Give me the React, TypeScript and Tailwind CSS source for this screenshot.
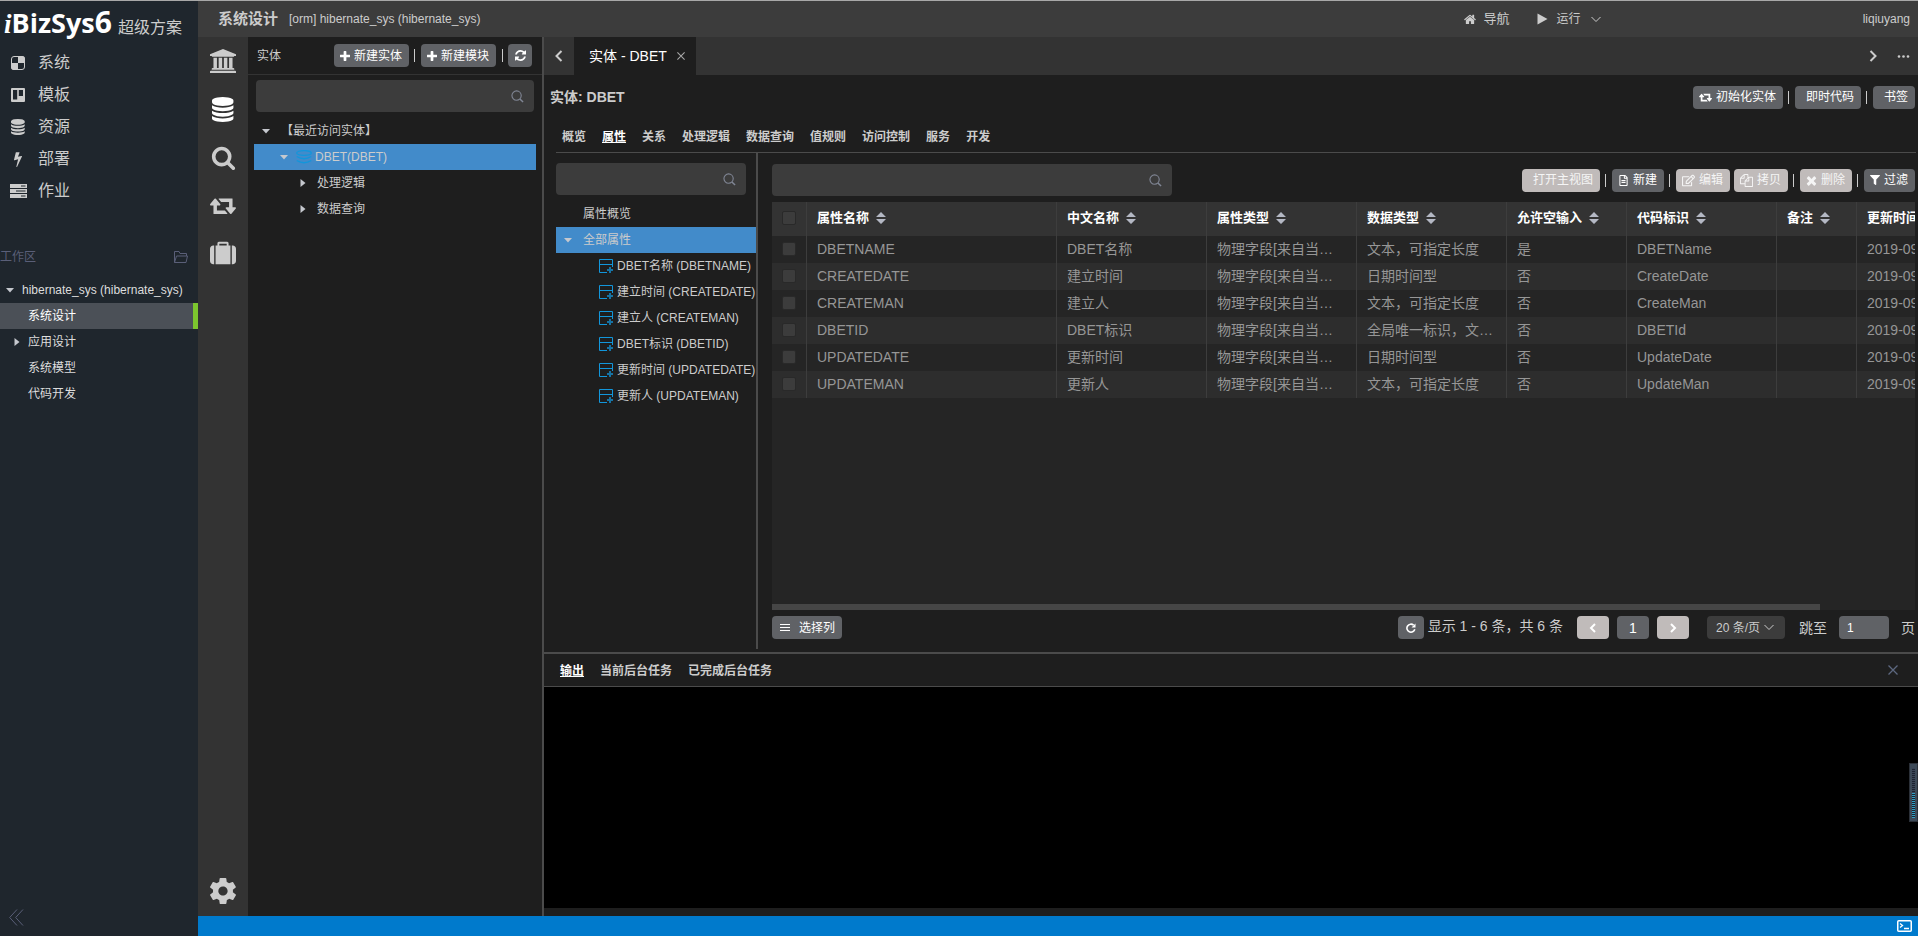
import { useState } from "react";
import type { ReactNode } from "react";
import { FaFilter, FaRegEdit, FaRegFileAlt } from "react-icons/fa";
import { IoMdSettings } from "react-icons/io";

const paths = {
  database:
    "M768 768q237 0 443-43t325-127v170q0 69-103 128t-280 93.5-385 34.5-385-34.5-280-93.5-103-128v-170q119 84 325 127t443 43zm0 768q237 0 443-43t325-127v170q0 69-103 128t-280 93.5-385 34.5-385-34.5-280-93.5-103-128v-170q119 84 325 127t443 43zm0-384q237 0 443-43t325-127v170q0 69-103 128t-280 93.5-385 34.5-385-34.5-280-93.5-103-128v-170q119 84 325 127t443 43zm0-1152q208 0 385 34.5t280 93.5 103 128v128q0 69-103 128t-280 93.5-385 34.5-385-34.5-280-93.5-103-128v-128q0-69 103-128t280-93.5 385-34.5z",
  retweet:
    "M1280 1632q0 13-9.5 22.5t-22.5 9.5h-960q-8 0-13.5-2t-9-7-5.5-8-3-11.5-1-11.5v-600h-192q-26 0-45-19t-19-45q0-24 15-41l320-384q19-22 49-22t49 22l320 384q15 17 15 41 0 26-19 45t-45 19h-192v384h576q16 0 25 11l160 192q7 10 7 21zm640-416q0 24-15 41l-320 384q-20 23-49 23t-49-23l-320-384q-15-17-15-41 0-26 19-45t45-19h192v-384h-576q-16 0-25-12l-160-192q-7-9-7-20 0-13 9.5-22.5t22.5-9.5h960q8 0 13.5 2t9 7 5.5 8 3 11.5 1 11.5v600h192q26 0 45 19t19 45z",
  search:
    "M1216 832q0-185-131.5-316.5t-316.5-131.5-316.5 131.5-131.5 316.5 131.5 316.5 316.5 131.5 316.5-131.5 131.5-316.5zm512 832q0 52-38 90t-90 38q-54 0-90-38l-343-342q-179 124-399 124-143 0-273.5-55.5t-225-150-150-225-55.5-273.5 55.5-273.5 150-225 225-150 273.5-55.5 273.5 55.5 225 150 150 225 55.5 273.5q0 220-124 399l343 343q37 37 37 90z",
  suitcase:
    "M640 384h512v-128h-512v128zm-352 0v1280h-64q-92 0-158-66t-66-158v-832q0-92 66-158t158-66h64zm1120 0v1280h-1024v-1280h128v-160q0-40 28-68t68-28h576q40 0 68 28t28 68v160h128zm384 224v832q0 92-66 158t-158 66h-64v-1280h64q92 0 158 66t66 158z",
  bank: "M960 0l960 384v128h-128q0 26-20.5 45t-48.5 19h-1526q-28 0-48.5-19t-20.5-45h-128v-128zm-704 640h256v768h128v-768h256v768h128v-768h256v768h128v-768h256v768h59q28 0 48.5 19t20.5 45v64h-1664v-64q0-26 20.5-45t48.5-19h59v-768zm1595 960q28 0 48.5 19t20.5 45v128h-1920v-128q0-26 20.5-45t48.5-19h1782z",
  home: "M1408 992v480q0 26-19 45t-45 19h-384v-384h-256v384h-384q-26 0-45-19t-19-45v-480q0-1 .5-3t.5-3l575-474 575 474q1 2 1 6zm223-69l-62 74q-8 9-21 11h-3q-13 0-21-7l-692-577-692 577q-12 8-24 7-13-2-21-11l-62-74q-8-10-7-23.5t11-21.5l719-599q32-26 76-26t76 26l244 204v-195q0-14 9-23t23-9h192q14 0 23 9t9 23v408l219 182q10 8 11 21.5t-7 23.5z",
  refresh:
    "M1511 928q0 5-1 7-64 268-268 434.5t-478 166.5q-146 0-282.5-55t-243.5-157l-129 129q-19 19-45 19t-45-19-19-45v-448q0-26 19-45t45-19h448q26 0 45 19t19 45-19 45l-137 137q71 66 161 102t187 36q134 0 250-65t186-179q11-17 53-117 8-23 30-23h192q13 0 22.5 9.5t9.5 22.5zm25-800v448q0 26-19 45t-45 19h-448q-26 0-45-19t-19-45 19-45l138-138q-148-137-349-137-134 0-250 65t-186 179q-11 17-53 117-8 23-30 23h-199q-13 0-22.5-9.5t-9.5-22.5v-7q65-268 270-434.5t480-166.5q146 0 284 55.5t245 156.5l130-129q19-19 45-19t45 19 19 45z",
  plus: "M1600 736v192q0 40-28 68t-68 28h-416v416q0 40-28 68t-68 28h-192q-40 0-68-28t-28-68v-416h-416q-40 0-68-28t-28-68v-192q0-40 28-68t68-28h416v-416q0-40 28-68t68-28h192q40 0 68 28t28 68v416h416q40 0 68 28t28 68z",
  bolt: "M1333 566q18 20 7 44l-540 1157q-13 25-42 25-4 0-14-2-17-5-25.5-19t-4.5-30l197-808-406 101q-4 1-12 1-18 0-31-11-18-15-13-39l201-825q4-14 16-23t28-9h328q19 0 32 12.5t13 29.5q0 8-5 18l-171 463 396-98q8-2 12-2 19 0 34 15z",
  times:
    "M1490 1322q0 40-28 68l-136 136q-28 28-68 28t-68-28l-294-294-294 294q-28 28-68 28t-68-28l-136-136q-28-28-28-68t28-68l294-294-294-294q-28-28-28-68t28-68l136-136q28-28 68-28t68 28l294 294 294-294q28-28 68-28t68 28l136 136q28 28 28 68t-28 68l-294 294 294 294q28 28 28 68z",
  copy: "M1696 384q40 0 68 28t28 68v1216q0 40-28 68t-68 28h-960q-40 0-68-28t-28-68v-288h-544q-40 0-68-28t-28-68v-672q0-40 20-88t48-76l408-408q28-28 76-48t88-20h416q40 0 68 28t28 68v328q68-40 128-40h416zm-544 213l-299 299h299v-299zm-640-384l-299 299h299v-299zm196 647l316-316v-416h-384v416q0 40-28 68t-68 28h-416v640h512v-256q0-40 20-88t48-76zm956 804v-1152h-384v416q0 40-28 68t-68 28h-416v640h896z",
};

const boxes: Record<string, string> = {
  database: "0 0 1536 1792",
  retweet: "0 256 1920 1408",
  bank: "0 0 1920 1792",
  search: "0 0 1792 1792",
  home: "0 0 1664 1664",
  refresh: "0 0 1536 1536",
  plus: "192 128 1408 1408",
  times: "192 192 1408 1408",
};

const Icon = ({ name, className }: { name: keyof typeof paths; className?: string }) => (
  <svg viewBox={boxes[name] || "0 0 1792 1792"} className={className} fill="currentColor" aria-hidden="true">
    <path d={paths[name]} />
  </svg>
);

const Magnifier = () => (
  <svg viewBox="0 0 14 14" className="w-[13px] h-[13px] text-[#808695]" fill="none" stroke="currentColor" aria-hidden="true">
    <circle cx="6" cy="6" r="5" strokeWidth="1.2" />
    <path d="M9.6 9.6L13 13" strokeWidth="1.6" />
  </svg>
);

const Chevron = ({ d, className }: { d: string; className?: string }) => (
  <svg viewBox="0 0 12 12" className={className} fill="none" stroke="currentColor" aria-hidden="true">
    <path d={d} />
  </svg>
);

const Cross = ({ className }: { className?: string }) => (
  <svg viewBox="0 0 10 10" className={className} fill="none" stroke="currentColor" strokeWidth="1.3" aria-hidden="true">
    <path d="M0.5 0.5L9.5 9.5M9.5 0.5L0.5 9.5" />
  </svg>
);

const Caret = ({ open }: { open?: boolean }) => (
  <svg viewBox="0 0 8 8" className="w-2 h-2 shrink-0 text-[#c5c8ce]" fill="currentColor" aria-hidden="true">
    <path d={open ? "M0 2h8L4 6.5z" : "M1.500 0v8L6.500 4z"} />
  </svg>
);

const SearchBox = ({ label, className }: { label: string; className: string }) => (
  <label className={`flex h-8 items-center rounded bg-[#3c3c3c] pr-[10px] ${className}`}>
    <input type="text" aria-label={label} className="min-w-0 flex-1 bg-transparent px-2 text-xs text-[#ccc] outline-none" />
    <Magnifier />
  </label>
);

interface BtnProps {
  icon?: ReactNode;
  children: ReactNode;
  disabled?: boolean;
}

const Btn = ({ icon, children, disabled }: BtnProps) => (
  <button
    disabled={disabled}
    className={`flex h-[23px] shrink-0 items-center gap-1 rounded pl-[6px] pr-[7px] text-xs whitespace-nowrap ${
      disabled ? "bg-[#c0bbba] text-[#f5f5f5]" : "bg-[#606266] text-white"
    }`}
  >
    <span className="flex min-w-px">{icon}</span>
    {children}
  </button>
);

const Sep = () => (
  <span className="flex w-3 justify-center">
    <span className="h-[13px] w-px bg-[#ccc]" />
  </span>
);

const menus = [
  {
    label: "系统",
    icon: (
      <svg viewBox="0 0 14 14" className="w-[14px] h-[14px]" fill="none" stroke="currentColor" aria-hidden="true">
        <rect x="0.5" y="0.5" width="13" height="13" rx="2.5" />
        <path d="M7 0H11Q14 0 14 3V7H7zM0 7H7V14H3Q0 14 0 11z" fill="currentColor" stroke="none" />
      </svg>
    ),
  },
  {
    label: "模板",
    icon: (
      <svg viewBox="0 0 14 14" className="w-[14px] h-[14px]" fill="currentColor" fillRule="evenodd" aria-hidden="true">
        <path d="M1 0H13Q14 0 14 1V13Q14 14 13 14H1Q0 14 0 13V1Q0 0 1 0zM2 2V11.5H6.2V2zM7.8 2V8H12V2z" />
      </svg>
    ),
  },
  { label: "资源", icon: <Icon name="database" className="h-4" /> },
  { label: "部署", icon: <Icon name="bolt" className="h-4" /> },
  {
    label: "作业",
    icon: (
      <svg viewBox="0 0 17 14" className="h-[14px]" fill="currentColor" fillRule="evenodd" aria-hidden="true">
        <path d="M0 0H17V4H0zM11 1.5V2.5H15.5V1.5zM0 5H17V9H0zM6 6.5V7.5H15.5V6.5zM0 10H17V14H0zM11 11.5V12.5H15.5V11.5z" />
      </svg>
    ),
  },
];

const workItems = ["系统设计", "应用设计", "系统模型", "代码开发"];
const entityTabs = ["概览", "属性", "关系", "处理逻辑", "数据查询", "值规则", "访问控制", "服务", "开发"];
const outputTabs = ["输出", "当前后台任务", "已完成后台任务"];

const fields = [
  { name: "DBETNAME", title: "DBET名称", type: "文本，可指定长度", empty: "是", code: "DBETName" },
  { name: "CREATEDATE", title: "建立时间", type: "日期时间型", empty: "否", code: "CreateDate" },
  { name: "CREATEMAN", title: "建立人", type: "文本，可指定长度", empty: "否", code: "CreateMan" },
  { name: "DBETID", title: "DBET标识", type: "全局唯一标识，文本类型", empty: "否", code: "DBETId" },
  { name: "UPDATEDATE", title: "更新时间", type: "日期时间型", empty: "否", code: "UpdateDate" },
  { name: "UPDATEMAN", title: "更新人", type: "文本，可指定长度", empty: "否", code: "UpdateMan" },
];

const columns = [
  { label: "属性名称", width: "w-[250px]" },
  { label: "中文名称", width: "w-[150px]" },
  { label: "属性类型", width: "w-[150px]" },
  { label: "数据类型", width: "w-[150px]" },
  { label: "允许空输入", width: "w-[120px]" },
  { label: "代码标识", width: "w-[150px]" },
  { label: "备注", width: "w-[80px]" },
  { label: "更新时间", width: "w-[160px]" },
];

const Sidebar = () => (
  <aside className="flex w-[198px] shrink-0 flex-col bg-[#1f262d] text-[#ccc]">
    <div className="flex h-[46px] items-baseline gap-[6px] pl-1 whitespace-nowrap">
      <span className="font-['Open_Sans'] text-[27px] leading-[42px] font-bold text-white">
        <i className="font-['Liberation_Serif']">i</i>BizSys<span className="text-[30px]">6</span>
      </span>
      <span className="pt-[2px] text-base leading-5">超级方案</span>
    </div>
    <nav className="flex flex-col">
      {menus.map((m) => (
        <a key={m.label} href="#" className="flex h-8 items-center">
          <span className="flex w-9 justify-center">{m.icon}</span>
          <span className="pl-[2px] text-base leading-5">{m.label}</span>
        </a>
      ))}
    </nav>
    <div className="mt-[33px] flex h-[34px] items-center justify-between pr-[10px] text-[#5a5f78]">
      <span className="text-xs">工作区</span>
      <svg viewBox="0 0 14 12" className="h-3 w-[14px]" fill="none" stroke="currentColor" aria-hidden="true">
        <path d="M.5 11.5V.5H5L6 2.500H12.500V5M.5 11.500L2.500 5H13.500L12 11.500z" />
      </svg>
    </div>
    <div className="mt-[3px] flex flex-col text-xs text-[#ddd]">
      <div className="flex h-[26px] items-center gap-2 pl-[6px] whitespace-nowrap">
        <Caret open />
        hibernate_sys (hibernate_sys)
      </div>
      {workItems.map((w, i) => (
        <div
          key={w}
          className={`flex h-[26px] items-center gap-[7px] pl-[13px] ${
            i === 0 ? "border-r-[5px] border-[#7cc62e] bg-[#4b5057] text-white" : ""
          }`}
        >
          <span className="flex w-2">{i === 1 && <Caret />}</span>
          {w}
        </div>
      ))}
    </div>
    <button aria-label="收起" className="mt-auto mb-[10px] ml-[9px] w-4 text-[#5a5f78]">
      <svg viewBox="0 0 16 17" fill="none" stroke="currentColor" aria-hidden="true">
        <path d="M8 .5L.7 8.500L8 16.500M14 .5L6.700 8.500L14 16.500" />
      </svg>
    </button>
  </aside>
);

const ToolStrip = () => (
  <div className="flex w-[50px] shrink-0 flex-col items-center bg-[#333] text-[#ccc]">
    {(["bank", "database", "search", "retweet", "suitcase"] as const).map((n) => (
      <button key={n} aria-label={n} className={`flex h-12 w-full items-center justify-center ${n === "database" ? "text-white" : ""}`}>
        <Icon name={n} className={n === "retweet" || n === "bank" || n === "suitcase" ? "w-[26px]" : "h-[25px]"} />
      </button>
    ))}
    <button aria-label="设置" className="mt-auto mb-[9px]">
      <IoMdSettings size={32} />
    </button>
  </div>
);

const EntityPanel = () => (
  <section className="flex w-[294px] shrink-0 flex-col text-xs">
    <div className="flex h-[38px] items-center border-b border-[#333] pr-[10px] pl-[9px]">
      <span className="mr-auto">实体</span>
      <Btn icon={<Icon name="plus" className="w-[10px]" />}>新建实体</Btn>
      <Sep />
      <Btn icon={<Icon name="plus" className="w-[10px]" />}>新建模块</Btn>
      <Sep />
      <button aria-label="刷新" className="flex h-[23px] w-6 items-center justify-center rounded bg-[#606266] text-white">
        <Icon name="refresh" className="w-[11px]" />
      </button>
    </div>
    <SearchBox label="搜索实体" className="mx-2 mt-[5px]" />
    <div className="mx-[6px] mt-[6px] flex flex-col">
      <div className="flex h-[26px] items-center gap-[11px] pl-2">
        <Caret open />
        【最近访问实体】
      </div>
      <div className="flex h-[26px] items-center bg-[#428bca] pl-[26px]">
        <Caret open />
        <svg viewBox="0 0 16 14" className="mr-[3px] ml-2 h-[14px] w-4 text-[#1296db]" fill="none" stroke="currentColor" strokeWidth="1.300" aria-hidden="true">
          <ellipse cx="8" cy="3" rx="7.300" ry="2.300" />
          <path d="M.7 6.500Q8 11 15.300 6.500M.7 10.500Q8 15 15.300 10.500" />
        </svg>
        DBET(DBET)
      </div>
      {["处理逻辑", "数据查询"].map((t) => (
        <div key={t} className="flex h-[26px] items-center gap-[10px] pl-[45px]">
          <Caret />
          {t}
        </div>
      ))}
    </div>
  </section>
);

const FieldTree = () => (
  <div className="flex w-[202px] shrink-0 flex-col border-r-2 border-[#4b4b4b] pt-[10px] text-xs">
    <SearchBox label="搜索属性" className="mr-[10px]" />
    <div className="mt-[6px] flex flex-col overflow-hidden whitespace-nowrap">
      <div className="flex h-[26px] items-center pl-[27px]">属性概览</div>
      <div className="flex h-[26px] items-center gap-[11px] bg-[#428bca] pl-2">
        <Caret open />
        全部属性
      </div>
      {fields.map((f) => (
        <div key={f.name} className="flex h-[26px] items-center gap-1 pl-[43px]">
          <svg viewBox="0 0 14 14" className="h-[14px] w-[14px] shrink-0 text-[#1296db]" fill="none" stroke="currentColor" aria-hidden="true">
            <path d="M8 13.500H.5V.5H13.500V8M.5 5.500H13.500" />
            <path d="M11 8V14M8 11H14" strokeWidth="2" opacity=".7" />
          </svg>
          {f.title} ({f.name})
        </div>
      ))}
    </div>
  </div>
);

const boxStyle =
  "block h-[14px] w-[14px] appearance-none rounded-[2px] border border-[#292929] bg-[#3c3c3c]";

const FieldTable = () => (
  <div className="mt-[6px] flex min-h-0 flex-1 flex-col overflow-hidden bg-[#252525]">
    <table className="w-[1245px] table-fixed border-separate border-spacing-0 text-left text-sm">
      <thead>
        <tr className="h-[34px] bg-[#333] text-[13px] text-white">
          <th className="w-[35px] border-r border-[#3d3d3d] pt-0 pr-0 pb-[2px] pl-[10px]">
            <input type="checkbox" aria-label="全选" className={boxStyle} />
          </th>
          {columns.map((c) => (
            <th key={c.label} className={`border-r border-[#3d3d3d] px-[10px] pt-0 pb-[2px] ${c.width}`}>
              <span className="flex items-center gap-[7px] leading-5 whitespace-nowrap">
                {c.label}
                <svg viewBox="0 0 10 12" className="h-3 w-[10px] text-[#b4b8c4]" fill="currentColor" aria-hidden="true">
                  <path d="M5 0L10 5H0zM5 12L0 7H10z" />
                </svg>
              </span>
            </th>
          ))}
        </tr>
      </thead>
      <tbody className="text-[#969696]">
        {fields.map((f) => (
          <tr key={f.name} className="h-[27px] even:bg-[#2d2d2d]">
            <td className="border-r border-[#3d3d3d] pt-0 pr-0 pb-px pl-[10px]">
              <input type="checkbox" aria-label={f.name} className={boxStyle} />
            </td>
            {[f.name, f.title, "物理字段[来自当前实体]", f.type, f.empty, f.code, "", "2019-09-12"].map((v, i) => (
              <td key={i} className="truncate border-r border-[#3d3d3d] px-[10px] pt-0 pb-px leading-5">
                {v}
              </td>
            ))}
          </tr>
        ))}
      </tbody>
    </table>
    <div className="mt-auto h-[6px] w-11/12 bg-[#464646]" />
  </div>
);

const Pager = () => {
  const [page, setPage] = useState("1");

  return (
    <div className="flex h-[39px] items-start pt-[6px] text-sm whitespace-nowrap">
      <button className="flex h-[23px] items-center gap-2 rounded bg-[#606266] px-[7px] text-xs text-white">
        <svg viewBox="0 0 12 8" className="w-3" stroke="currentColor" aria-hidden="true">
          <path d="M1 .5H11M1 3.500H11M1 6.500H11" />
        </svg>
        选择列
      </button>
      <button aria-label="刷新" className="mr-1 ml-auto flex h-[23px] w-[26px] items-center justify-center rounded bg-[#606266] text-white">
        <svg viewBox="0 0 10 10" className="w-[10px]" fill="none" stroke="currentColor" strokeWidth="1.600" aria-hidden="true">
          <path d="M8.800 6.200A4 4 0 1 1 7.600 2.200" />
          <path d="M9.500 .5V4.500H5.500z" fill="currentColor" stroke="none" />
        </svg>
      </button>
      <span className="mr-[14px] leading-5">显示 1 - 6 条，共 6 条</span>
      <div className="flex gap-2">
        <button disabled aria-label="上一页" className="flex h-[23px] w-8 items-center justify-center rounded bg-[#c0bbba] text-white">
          <Chevron d="M8 2L4 6L8 10" className="w-3 stroke-2" />
        </button>
        <button className="h-[23px] w-8 rounded bg-[#606266] leading-5 text-white">1</button>
        <button disabled aria-label="下一页" className="flex h-[23px] w-8 items-center justify-center rounded bg-[#c0bbba] text-white">
          <Chevron d="M4 2L8 6L4 10" className="w-3 stroke-2" />
        </button>
      </div>
      <span className="relative ml-[18px] flex">
        <select aria-label="每页条数" className="h-[23px] w-[78px] appearance-none rounded bg-[#3c3c3c] pl-[9px] text-xs text-[#ccc]">
          <option>20 条/页</option>
        </select>
        <Chevron d="M1.500 4L6 8.500L10.500 4" className="pointer-events-none absolute top-[5px] right-[10px] w-3" />
      </span>
      <label className="ml-[14px] flex leading-6">
        跳至
        <input
          type="text"
          value={page}
          onChange={(e) => setPage(e.target.value)}
          className="mr-3 ml-[12px] h-[23px] w-[50px] rounded bg-[#606266] px-2 text-xs text-white outline-none"
        />
        页
      </label>
    </div>
  );
};

const FieldGrid = () => (
  <div className="flex min-w-0 flex-1 flex-col pt-[11px] pr-[3px] pl-[14px]">
    <div className="flex items-center">
      <SearchBox label="搜索" className="mr-auto w-[400px]" />
      <Btn disabled>打开主视图</Btn>
      <Sep />
      <Btn icon={<FaRegFileAlt size={11} />}>新建</Btn>
      <Sep />
      <Btn disabled icon={<FaRegEdit size={13} />}>编辑</Btn>
      <span className="w-1" />
      <Btn disabled icon={<Icon name="copy" className="w-[13px]" />}>拷贝</Btn>
      <Sep />
      <Btn disabled icon={<Icon name="times" className="w-[11px]" />}>删除</Btn>
      <Sep />
      <Btn icon={<FaFilter size={10} />}>过滤</Btn>
    </div>
    <FieldTable />
    <Pager />
  </div>
);

const EntityView = () => (
  <div className="flex min-h-0 flex-1 flex-col">
    <div className="flex h-11 items-center pr-[3px] pl-[6px]">
      <h1 className="mr-auto text-sm leading-5 font-bold">实体: DBET</h1>
      <Btn icon={<Icon name="retweet" className="w-[13px]" />}>初始化实体</Btn>
      <Sep />
      <Btn>即时代码</Btn>
      <Sep />
      <Btn>书签</Btn>
    </div>
    <div className="mr-[2px] ml-3 flex h-[34px] items-center gap-4 border-b border-[#4b4b4b] pt-[3px] pl-[6px] text-xs font-bold">
      {entityTabs.map((t) => (
        <a key={t} href="#" className={t === "属性" ? "text-white underline" : ""}>
          {t}
        </a>
      ))}
    </div>
    <div className="mb-[3px] ml-3 flex min-h-0 flex-1">
      <FieldTree />
      <FieldGrid />
    </div>
  </div>
);

const OutputPanel = () => (
  <section className="flex h-[264px] shrink-0 flex-col border-t-2 border-[#4b4b4b]">
    <div className="flex h-[33px] items-center gap-4 border-b border-[#4b4b4b] pt-[2px] pr-5 pl-4 text-xs font-bold">
      {outputTabs.map((t, i) => (
        <a key={t} href="#" className={i === 0 ? "text-white underline" : ""}>
          {t}
        </a>
      ))}
      <button aria-label="关闭" className="ml-auto pb-[2px] text-[#5d6880]">
        <Cross className="w-[10px]" />
      </button>
    </div>
    <div className="relative flex-1 bg-black">
      {/* level meter docked on the right edge */}
      <div className="absolute top-[76px] right-0 flex h-[59px] w-[9px] justify-center border border-[#2b3038] bg-[#3d4a58] py-1">
        <svg viewBox="0 0 3 50" className="h-[50px] w-[3px] bg-[#1c2430]" strokeDasharray="1 1" strokeWidth="3" aria-hidden="true">
          <path d="M1.500 0V25" stroke="#3a4356" />
          <path d="M1.500 25V50" stroke="#2f9fc4" />
        </svg>
      </div>
    </div>
    <div className="h-2" />
  </section>
);

export default function App() {
  return (
    <div className="flex h-screen overflow-hidden border-t border-[#a8a8a8] bg-[#1e1e1e] font-['Liberation_Sans','Noto_Sans_CJK_SC',sans-serif] text-[#ccc]">
      <Sidebar />
      <div className="flex min-w-0 flex-1 flex-col">
        <header className="flex h-9 shrink-0 items-center bg-[#3c3c3c] pr-2 pl-5 text-xs">
          <span className="text-[15px] leading-5 font-bold">系统设计</span>
          <span className="ml-[11px]">[orm] hibernate_sys (hibernate_sys)</span>
          <a href="#" className="ml-auto flex items-center gap-2 text-[13px]">
            <Icon name="home" className="w-3" />
            导航
          </a>
          <button className="ml-[27px] flex items-center gap-[9px]">
            <svg viewBox="0 0 11 12" className="w-[11px]" fill="currentColor" aria-hidden="true">
              <path d="M.5 .5L10.500 6L.5 11.500z" />
            </svg>
            运行
            <Chevron d="M1.500 4L6 8.500L10.500 4" className="w-3" />
          </button>
          <span className="ml-[261px]">liqiuyang</span>
        </header>
        <div className="flex min-h-0 flex-1">
          <ToolStrip />
          <EntityPanel />
          <main className="flex min-w-0 flex-1 flex-col border-l-2 border-[#4b4b4b]">
            <div className="flex h-[38px] shrink-0 items-center bg-[#333]">
              <button aria-label="向左" className="flex w-[30px] justify-center">
                <Chevron d="M8.500 1L3.500 6L8.500 11" className="w-3 stroke-2" />
              </button>
              <div className="flex h-full items-center gap-[10px] bg-[#1e1e1e] pr-[11px] pl-[15px] text-sm text-white">
                实体 - DBET
                <button aria-label="关闭标签" className="text-[#aaa]">
                  <Cross className="w-2" />
                </button>
              </div>
              <button aria-label="向右" className="ml-auto">
                <Chevron d="M3.500 1L8.500 6L3.500 11" className="w-3 stroke-2" />
              </button>
              <button aria-label="更多" className="mr-2 ml-[18px]">
                <svg viewBox="0 0 13 3" className="w-[13px]" fill="currentColor" aria-hidden="true">
                  <circle cx="2" cy="1.500" r="1.300" />
                  <circle cx="6.500" cy="1.500" r="1.300" />
                  <circle cx="11" cy="1.500" r="1.300" />
                </svg>
              </button>
            </div>
            <EntityView />
            <OutputPanel />
          </main>
        </div>
        <footer className="flex h-5 shrink-0 items-center justify-end bg-[#007acc] pr-[6px] text-white">
          <svg viewBox="0 0 15 12" className="w-[15px]" fill="none" stroke="currentColor" aria-hidden="true">
            <rect x=".75" y=".75" width="13.500" height="10.500" rx="1" strokeWidth="1.500" />
            <path d="M3 3.500L5.500 5.500L3 7.500M7 8.500H12" strokeWidth="1.300" />
          </svg>
        </footer>
      </div>
    </div>
  );
}
